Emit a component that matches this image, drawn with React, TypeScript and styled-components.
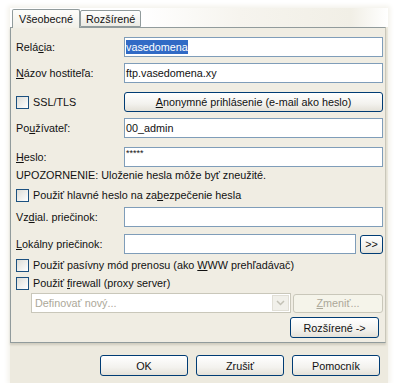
import React from 'react'
import styled, { createGlobalStyle } from 'styled-components'

const GlobalStyle = createGlobalStyle`
  html, body {
    margin: 0;
    padding: 0;
    background: #ffffff;
  }
  body {
    font-family: "Liberation Sans", Arial, sans-serif;
    font-size: 10.8px;
    color: #111;
  }
`

const Frame = styled.div`
  margin: 8px 0 0 10px;
  width: 378px;
  height: 375px;
  background: #edeadf;
  box-shadow: 0 0 5px 2px #f3f1ea;
  display: flex;
  flex-direction: column;
`

const TabStrip = styled.div`
  display: flex;
  align-items: flex-end;
  height: 19px;
  padding-left: 2px;
  background: #ffffff;
`

const Tab = styled.div<{ $active?: boolean }>`
  height: ${p => (p.$active ? 18 : 15)}px;
  padding: 0 ${p => (p.$active ? 6 : 5)}px;
  display: flex;
  align-items: center;
  border: 1px solid #919b9c;
  border-bottom: ${p => (p.$active ? 'none' : '1px solid #919b9c')};
  border-radius: 2px 2px 0 0;
  background: ${p => (p.$active ? 'linear-gradient(#fdfdfb, #f2f0e8)' : 'linear-gradient(#fefefe, #ecebe4)')};
  margin-bottom: ${p => (p.$active ? '-1px' : '0')};
  position: relative;
  z-index: ${p => (p.$active ? 2 : 1)};
`

const TabGap = styled.div`
  flex: 1;
  height: 100%;
  background: linear-gradient(90deg, #ffffff, #f6f4ee 40%, #f1efe6 85%, #ffffff);
`

const Panel = styled.div`
  width: 376px;
  height: 316px;
  box-sizing: border-box;
  border: 1px solid #919b9c;
  border-right-color: #c9c7ba;
  background: #f0ede3;
  box-shadow: 0 2px 2px rgba(120, 115, 95, 0.25);
  padding: 9px 2px 0 5px;
  display: flex;
  flex-direction: column;
`

const Row = styled.div<{ $mt?: number; $h?: number; $indent?: number }>`
  display: flex;
  align-items: center;
  height: ${p => p.$h ?? 20}px;
  margin-top: ${p => p.$mt ?? 0}px;
  padding-left: ${p => p.$indent ?? 0}px;
  white-space: nowrap;
`

const Label = styled.span`
  width: 108px;
  flex-shrink: 0;
  display: flex;
  align-items: center;
`

const Text = styled.span`
  white-space: pre;
`

const Input = styled.div<{ $top?: boolean }>`
  flex: 1;
  height: 18px;
  border: 1px solid #7f9db9;
  background: #fff;
  display: flex;
  align-items: ${p => (p.$top ? 'flex-start' : 'center')};
  padding-left: 1px;
  font-size: ${p => (p.$top ? '9px' : 'inherit')};
`

const Selected = styled.span`
  background: #316ac5;
  color: #fff;
  padding: 1px 0;
`

const Button = styled.div<{ $w?: number; $disabled?: boolean; $h?: number }>`
  width: ${p => (p.$w ? `${p.$w}px` : 'auto')};
  flex: ${p => (p.$w ? 'none' : 1)};
  height: ${p => p.$h ?? 19}px;
  box-sizing: border-box;
  border: 1px solid ${p => (p.$disabled ? '#c9c7ba' : '#003c74')};
  border-radius: 3px;
  background: ${p =>
    p.$disabled ? '#f5f4ea' : 'linear-gradient(#ffffff, #f3f2ee 60%, #e4e1d8)'};
  color: ${p => (p.$disabled ? '#aca899' : '#111')};
  display: flex;
  align-items: center;
  justify-content: center;
  white-space: pre;
`

const Box = styled.span`
  width: 11px;
  height: 11px;
  border: 1px solid #1c5180;
  background: linear-gradient(135deg, #dcdcd7, #ffffff);
  flex-shrink: 0;
  margin-right: 4px;
`

const Warning = styled.div`
  margin-top: 1px;
  height: 14px;
  line-height: 14px;
`

const Combo = styled.div`
  width: 258px;
  height: 18px;
  border: 1px solid #c9c7ba;
  background: #fff;
  display: flex;
  align-items: stretch;
  color: #aca899;
`

const ComboText = styled.span`
  flex: 1;
  display: flex;
  align-items: center;
  padding-left: 3px;
`

const ComboArrow = styled.span`
  width: 15px;
  margin: 1px;
  background: #f1f0ea;
  border: 1px solid #e1dfd6;
  display: flex;
  align-items: center;
  justify-content: center;
`

const Right = styled.div`
  display: flex;
  justify-content: flex-end;
  padding-right: 4px;
  margin-top: 4px;
`

const Footer = styled.div`
  display: flex;
  justify-content: flex-end;
  gap: 8px;
  margin-top: 12px;
  padding-right: 8px;
`

const App = () => {
  return (
    <>
      <GlobalStyle />
      <Frame>
        <TabStrip>
          <Tab $active>Všeobecné</Tab>
          <Tab>Rozšírené</Tab>
          <TabGap />
        </TabStrip>
        <Panel>
          <Row>
            <Label><Text>Relá<u>c</u>ia:</Text></Label>
            <Input><Selected>vasedomena</Selected></Input>
          </Row>
          <Row $mt={6}>
            <Label><Text><u>N</u>ázov hostiteľa:</Text></Label>
            <Input>ftp.vasedomena.xy</Input>
          </Row>
          <Row $mt={9}>
            <Label>
              <Box />
              <Text>SSL/TLS</Text>
            </Label>
            <Button $h={20}><Text><u>A</u>nonymné prihlásenie (e-mail ako heslo)</Text></Button>
          </Row>
          <Row $mt={6}>
            <Label><Text>Po<u>u</u>žívateľ:</Text></Label>
            <Input>00_admin</Input>
          </Row>
          <Row $mt={9}>
            <Label><Text><u>H</u>eslo:</Text></Label>
            <Input $top>*****</Input>
          </Row>
          <Warning>UPOZORNENIE: Uloženie hesla môže byť zneužité.</Warning>
          <Row $mt={6} $h={14}>
            <Box />
            <Text>Použiť hlavné heslo na za<u>b</u>ezpečenie hesla</Text>
          </Row>
          <Row $mt={5}>
            <Label><Text>Vz<u>d</u>ial. priečinok:</Text></Label>
            <Input />
          </Row>
          <Row $mt={7}>
            <Label><Text><u>L</u>okálny priečinok:</Text></Label>
            <Input />
            <Button $w={23} $h={19} style={{ marginLeft: 4 }}>&gt;&gt;</Button>
          </Row>
          <Row $mt={4} $h={14}>
            <Box />
            <Text>Použiť pasívny mód prenosu (ako <u>W</u>WW prehľadávač)</Text>
          </Row>
          <Row $mt={4} $h={14}>
            <Box />
            <Text>Použiť <u>f</u>irewall (proxy server)</Text>
          </Row>
          <Row $mt={3} $indent={15}>
            <Combo>
              <ComboText>Definovať nový...</ComboText>
              <ComboArrow>
                <svg width="9" height="6" viewBox="0 0 9 6">
                  <path d="M1 1 L4.5 4.5 L8 1" fill="none" stroke="#c3c1b6" strokeWidth="1.5" />
                </svg>
              </ComboArrow>
            </Combo>
            <Button $w={90} $disabled style={{ marginLeft: 2 }}><Text><u>Z</u>meniť...</Text></Button>
          </Row>
          <Right>
            <Button $w={89} $h={21}>Rozšírené -&gt;</Button>
          </Right>
        </Panel>
        <Footer>
          <Button $w={88} $h={21}>OK</Button>
          <Button $w={88} $h={21}>Zrušiť</Button>
          <Button $w={88} $h={21}>Pomocník</Button>
        </Footer>
      </Frame>
    </>
  )
}

export default App
